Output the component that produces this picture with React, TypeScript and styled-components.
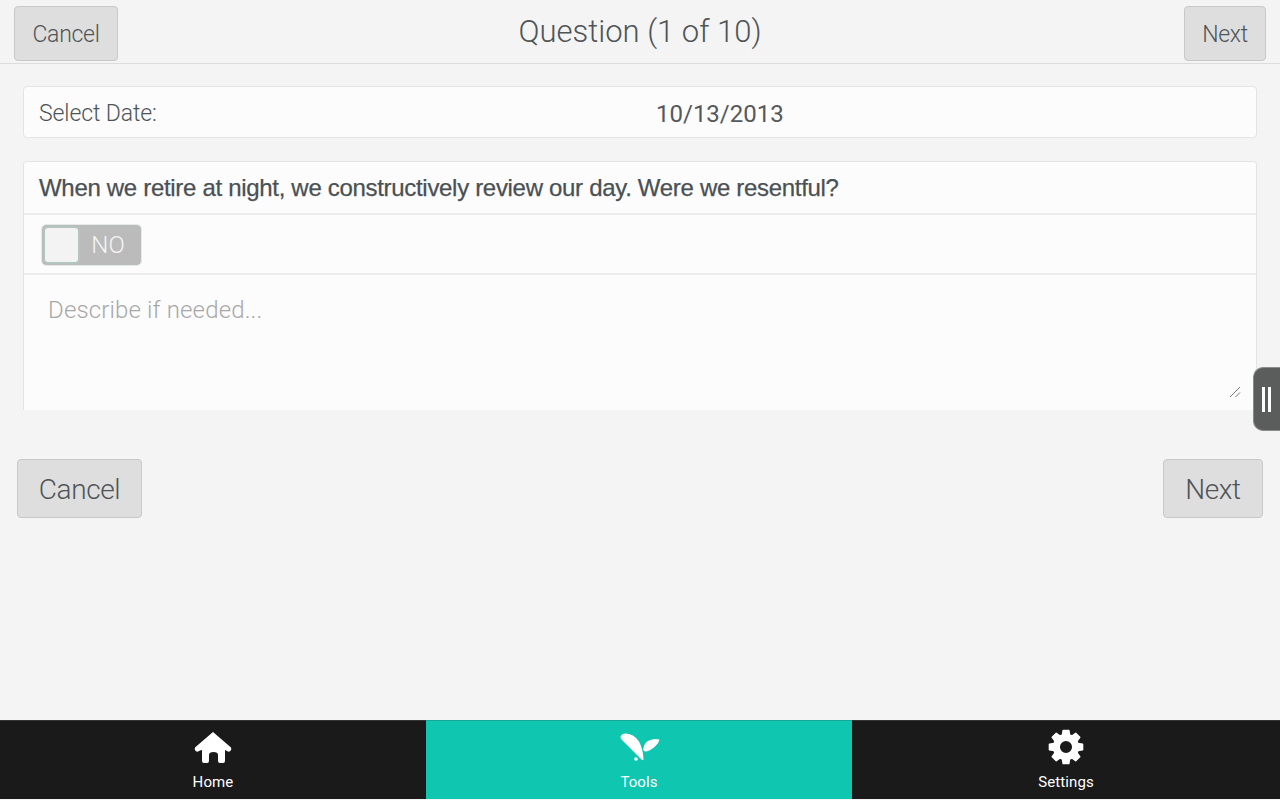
import React from "react";
import styled, { createGlobalStyle } from "styled-components";

const Global = createGlobalStyle`
  html, body { margin: 0; padding: 0; height: 100%; background: #f4f4f4; overflow: hidden; }
  #root { height: 100%; }
  * { box-sizing: border-box; }
`;

const Page = styled.div`
  position: relative;
  width: 1280px;
  height: 800px;
  display: flex;
  flex-direction: column;
  font-family: Roboto, "Liberation Sans", Arial, sans-serif;
  font-weight: 300;
  color: #555b5e;
  background: #f4f4f4;
`;

const Header = styled.header`
  height: 64px;
  flex: none;
  display: grid;
  grid-template-columns: 1fr auto 1fr;
  align-items: start;
  padding: 7px 14px 0;
  border-bottom: 1px solid #dcdcdc;
`;

const Title = styled.h1`
  margin: 0;
  text-align: center;
  font-size: 31px;
  font-weight: 300;
  line-height: 50px;
  color: #4f5457;
`;

const HeaderButton = styled.button`
  height: 55px;
  margin-top: -1px;
  width: ${(p) => p.$w}px;
  justify-self: ${(p) => p.$side};
  padding: 1px 0 0;
  border: 1px solid #c8c8c8;
  border-radius: 4px;
  background: #dedede;
  font: 300 23px Roboto, "Liberation Sans", Arial, sans-serif;
  letter-spacing: -0.3px;
  color: #4f5457;
`;

const Content = styled.main`
  flex: 1;
  display: flex;
  flex-direction: column;
  padding: 22px 23px 0;
`;

const DateCard = styled.div`
  height: 52px;
  display: grid;
  grid-template-columns: 1fr 1fr;
  align-items: center;
  padding: 3px 15px 0;
  background: #fcfcfc;
  border: 1px solid #e4e4e4;
  border-radius: 4px;
`;

const DateLabel = styled.span`
  font-size: 23px;
  letter-spacing: -0.1px;
  color: #4f5457;
`;

const DateValue = styled.span`
  font-size: 24px;
  font-weight: 400;
  color: #55595c;
  padding-left: 16px;
`;

const QuestionCard = styled.section`
  margin-top: 23px;
  height: 249px;
  background: #fcfcfc;
  border: 1px solid #e4e4e4;
  border-bottom: none;
  border-radius: 4px 4px 0 0;
  display: flex;
  flex-direction: column;
`;

const QuestionText = styled.div`
  height: 53px;
  flex: none;
  padding: 0 15px;
  display: flex;
  align-items: center;
  font-family: "Liberation Sans", Arial, sans-serif;
  font-weight: 400;
  font-size: 24px;
  letter-spacing: -0.31px;
  -webkit-text-stroke: 0.25px #4a5053;
  color: #4a5053;
  border-bottom: 2px solid #ececec;
`;

const ToggleRow = styled.div`
  height: 60px;
  flex: none;
  display: flex;
  align-items: center;
  padding: 2px 0 0 17px;
  border-bottom: 2px solid #ececec;
`;

const Toggle = styled.div`
  width: 101px;
  height: 42px;
  padding: 1px;
  border: 1px solid #e4eae8;
  border-radius: 5px;
  background: #bbbbbb;
  background-clip: padding-box;
  display: flex;
  align-items: center;
`;

const Knob = styled.div`
  width: 37px;
  height: 38px;
  flex: none;
  background: #f3f3f3;
  border: 2px solid #b4c4bf;
  border-radius: 5px;
`;

const ToggleLabel = styled.span`
  flex: 1;
  text-align: center;
  font-size: 24px;
  color: #f4f4f4;
  padding-right: 4px;
`;

const NotesArea = styled.div`
  flex: 1;
  position: relative;
  padding: 20px 24px;
  font-size: 24px;
  line-height: 30px;
  letter-spacing: 0.15px;
  color: #a8a8a8;
`;

const Grip = styled.svg`
  position: absolute;
  right: 15px;
  bottom: 12px;
`;

const Actions = styled.div`
  margin: 49px -6px 0;
  display: flex;
  justify-content: space-between;
`;

const ActionButton = styled.button`
  height: 59px;
  width: ${(p) => p.$w}px;
  padding: 1px 0 0;
  border: 1px solid #c8c8c8;
  border-radius: 4px;
  background: #dedede;
  font: 300 28px Roboto, "Liberation Sans", Arial, sans-serif;
  letter-spacing: -0.4px;
  color: #4f5457;
`;

const SideHandle = styled.div`
  position: absolute;
  top: 367px;
  right: 0;
  width: 27px;
  height: 64px;
  background: #5b5d5c;
  border: 1px solid #8a8a8a;
  border-right: none;
  border-radius: 10px 0 0 10px;
  display: flex;
  justify-content: center;
  align-items: center;
  gap: 3px;
  padding-right: 2px;
`;

const HandleBar = styled.i`
  display: block;
  width: 3px;
  height: 25px;
  background: #fff;
`;

const TabBar = styled.nav`
  height: 79px;
  flex: none;
  margin-bottom: 1px;
  display: grid;
  grid-template-columns: 426px 426px 428px;
  background: #1a1a1a;
  border-top: 1px solid #333;
`;

const Tab = styled.div`
  display: flex;
  flex-direction: column;
  align-items: center;
  background: ${(p) => (p.$active ? "#0fc6b1" : "transparent")};
  border-top: ${(p) => (p.$active ? "1px solid #13a898" : "none")};
  margin-top: ${(p) => (p.$active ? "-1px" : "0")};
  color: #fff;
  font-family: Roboto, sans-serif;
  font-weight: 400;
  font-size: 15px;
  letter-spacing: 0.1px;
`;

const TabIcon = styled.svg`
  margin-top: 7px;
  height: 38px;
  width: 44px;
  fill: #fff;
`;

const GearIcon = styled(TabIcon)`
  stroke: #fff;
  stroke-width: 1.5;
  stroke-linejoin: round;
`;

const TabLabel = styled.span`
  margin-top: 6px;
  line-height: 20px;
`;

const gear = (() => {
  const cx = 22, cy = 19, teeth = 8;
  let d = "";
  const p = (r: number, t: number) => `${(cx + r * Math.cos(t)).toFixed(2)} ${(cy + r * Math.sin(t)).toFixed(2)}`;
  for (let i = 0; i < teeth; i++) {
    const a = (i / teeth) * Math.PI * 2 - Math.PI / 2;
    const w = 0.17;
    d += `${i === 0 ? "M" : "L"}${p(12.5, a - w - 0.12)} L${p(16.8, a - w)} L${p(16.8, a + w)} L${p(12.5, a + w + 0.12)} `;
  }
  d += `Z M${cx + 6.8} ${cy} A6.8 6.8 0 1 0 ${cx - 6.8} ${cy} A6.8 6.8 0 1 0 ${cx + 6.8} ${cy} Z`;
  return d;
})();

export default function App() {
  return (
    <Page>
      <Global />
      <Header>
        <HeaderButton $w={104} $side="start">Cancel</HeaderButton>
        <Title>Question (1 of 10)</Title>
        <HeaderButton $w={82} $side="end">Next</HeaderButton>
      </Header>
      <Content>
        <DateCard>
          <DateLabel>Select Date:</DateLabel>
          <DateValue>10/13/2013</DateValue>
        </DateCard>
        <QuestionCard>
          <QuestionText>When we retire at night, we constructively review our day. Were we resentful?</QuestionText>
          <ToggleRow>
            <Toggle>
              <Knob />
              <ToggleLabel>NO</ToggleLabel>
            </Toggle>
          </ToggleRow>
          <NotesArea>
            Describe if needed...
            <Grip width="12" height="12" viewBox="0 0 12 12">
              <path d="M1 11 L11 1 M6.5 11 L11 6.5" stroke="#777" strokeWidth="1" fill="none" />
            </Grip>
          </NotesArea>
        </QuestionCard>
        <Actions>
          <ActionButton $w={125}>Cancel</ActionButton>
          <ActionButton $w={100}>Next</ActionButton>
        </Actions>
      </Content>
      <SideHandle>
        <HandleBar />
        <HandleBar />
      </SideHandle>
      <TabBar>
        <Tab>
          <TabIcon viewBox="0 0 44 38">
            <path d="M22 4 L40 19.5 Q41 22 38.5 23.5 Q37 24 35 22.5 L34 22 L34 33 Q34 35 32 35 L29 35 Q27 35 27 33 L27 27 Q27 24 22.5 24 Q18 24 18 27 L18 33 Q18 35 16 35 L13 35 Q11 35 11 33 L11 22 L9 22.5 Q7 24 5.5 23.5 Q3 22 4 19.5 Z" />
          </TabIcon>
          <TabLabel>Home</TabLabel>
        </Tab>
        <Tab $active>
          <TabIcon viewBox="0 0 44 38">
            <path d="M3.5 9 Q4 5.500 9 5.500 Q17 6 22 13.500 Q26 21 26.500 31 Q26.500 33 24.500 31.500 L5 12 Q3.500 10.500 3.500 9 Z" />
            <path d="M26.300 21 Q27 14.500 32 12.500 Q37 10 42.500 11.500 Q42 15 38 18.500 Q33 23 29 23.500 Q26.300 23.500 26.300 21 Z" />
            <circle cx="19" cy="31" r="1.800" />
          </TabIcon>
          <TabLabel>Tools</TabLabel>
        </Tab>
        <Tab>
          <GearIcon viewBox="0 0 44 38">
            <path fillRule="evenodd" d={gear} />
          </GearIcon>
          <TabLabel>Settings</TabLabel>
        </Tab>
      </TabBar>
    </Page>
  );
}
